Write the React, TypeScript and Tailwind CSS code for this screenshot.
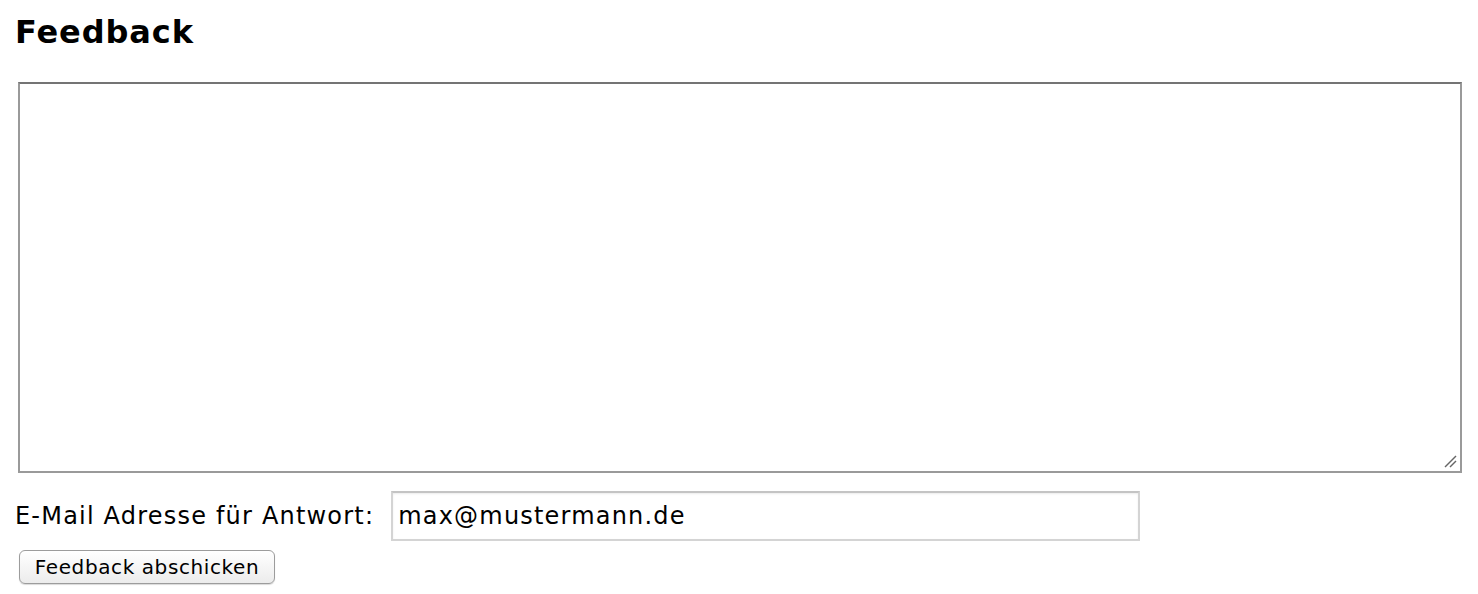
import React from "react";

export default function App() {
  return (
    <div className="w-[1478px] h-[594px] bg-white text-black font-['DejaVu_Sans',Verdana,sans-serif] overflow-hidden">
      <div className="pl-[15px] pt-[10px]">
        <h1 className="text-[32px] font-bold leading-[44px] tracking-[0.9px]">Feedback</h1>
        <div className="mt-[28px] ml-[3px] w-[1444px] h-[391px] relative border-2 border-t-[#747474] border-l-[#9a9a9a] border-r-[#9a9a9a] border-b-[#9a9a9a] bg-white">
          <svg className="absolute right-[3px] bottom-[3px]" width="14" height="14" viewBox="0 0 14 14">
            <line x1="2" y1="13" x2="13" y2="2" stroke="#666" strokeWidth="1.5" />
            <line x1="7" y1="13" x2="13" y2="7" stroke="#666" strokeWidth="1.5" />
          </svg>
        </div>
        <div className="flex items-center mt-[18px] h-[50px]">
          <span className="text-[24px] leading-[28px] mr-[17px] tracking-[1.2px]">E-Mail Adresse für Antwort:</span>
          <div className="w-[749px] h-[50px] border-2 border-[#d4d4d4] border-t-[#c4c4c4] shadow-[inset_0_1px_2px_rgba(0,0,0,0.08)] flex items-center pl-[5px] text-[24px] tracking-[1.2px]">
            max@mustermann.de
          </div>
        </div>
        <div className="mt-[9px] ml-[4px] w-[256px] h-[34px] rounded-[6px] border border-[#9c9c9c] bg-gradient-to-b from-white to-[#ececec] shadow-[0_1px_1px_rgba(0,0,0,0.15)] flex items-center justify-center text-[20px] leading-none tracking-[0.6px]">
          Feedback abschicken
        </div>
      </div>
    </div>
  );
}
